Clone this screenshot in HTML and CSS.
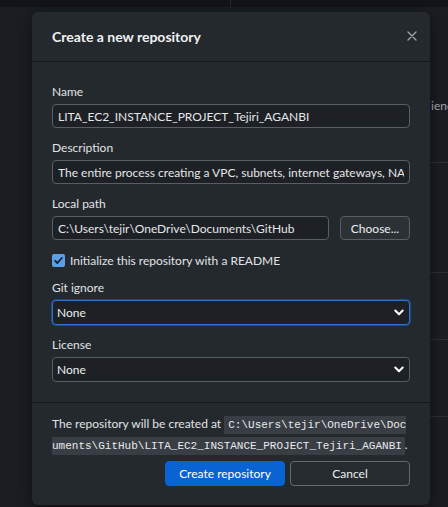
FILE: index.html
```html
<!DOCTYPE html>
<html lang="en">
<head>
<meta charset="utf-8">
<title>Create a new repository</title>
<link rel="stylesheet" href="styles.css">
</head>
<body>
<div class="app">
  <div class="toolbar"><div class="toolbar-left"></div><div class="toolbar-right"></div></div>
  <div class="main">
    <div class="sidebar"></div>
    <div class="pane">
      <div class="row row1"><span class="bg-text">ience</span></div>
      <div class="row row2"></div>
      <div class="row row3"></div>
      <div class="row row4"></div>
      <div class="row row5"></div>
    </div>
  </div>
</div>

<div class="dialog" role="dialog" aria-labelledby="dlg-title">
  <header class="dialog-header">
    <h1 id="dlg-title" class="dialog-title">Create a new repository</h1>
    <button class="close" aria-label="Close">
      <svg width="10" height="10" viewBox="0 0 10 10"><path d="M1 1 L9 9 M9 1 L1 9" stroke="currentColor" stroke-width="1.3" fill="none" stroke-linecap="round"/></svg>
    </button>
  </header>

  <div class="dialog-body">
    <label class="field">
      <span class="label">Name</span>
      <input class="text-input" type="text" value="LITA_EC2_INSTANCE_PROJECT_Tejiri_AGANBI">
    </label>
    <label class="field">
      <span class="label">Description</span>
      <input class="text-input" type="text" value="The entire process creating a VPC, subnets, internet gateways, NAT">
    </label>
    <div class="field">
      <span class="label">Local path</span>
      <div class="path-row">
        <input class="text-input path-input" type="text" value="C:\Users\tejir\OneDrive\Documents\GitHub">
        <button class="btn choose">Choose...</button>
      </div>
    </div>
    <label class="check-row">
      <span class="checkbox"><svg width="11" height="11" viewBox="0 0 11 11"><path d="M2.2 5.8 L4.4 8 L8.8 3" stroke="#1b1f24" stroke-width="1.8" fill="none" stroke-linecap="round" stroke-linejoin="round"/></svg></span>
      <span class="check-label">Initialize this repository with a README</span>
    </label>
    <label class="field">
      <span class="label">Git ignore</span>
      <span class="select-wrap focused">
        <select class="select"><option>None</option></select>
        <svg class="chev" width="10" height="7" viewBox="0 0 10 7"><path d="M1.3 1.5 L5 5.2 L8.7 1.5" stroke="#ffffff" stroke-width="2" fill="none" stroke-linecap="round" stroke-linejoin="round"/></svg>
      </span>
    </label>
    <label class="field">
      <span class="label">License</span>
      <span class="select-wrap">
        <select class="select"><option>None</option></select>
        <svg class="chev" width="10" height="7" viewBox="0 0 10 7"><path d="M1.3 1.5 L5 5.2 L8.7 1.5" stroke="#ffffff" stroke-width="2" fill="none" stroke-linecap="round" stroke-linejoin="round"/></svg>
      </span>
    </label>
  </div>

  <footer class="dialog-footer">
    <p class="path-note">The repository will be created at <code class="code">C:\Users\tejir\OneDrive\Documents\GitHub\LITA_EC2_INSTANCE_PROJECT_Tejiri_AGANBI</code>.</p>
    <div class="buttons">
      <button class="btn primary">Create repository</button>
      <button class="btn cancel">Cancel</button>
    </div>
  </footer>
</div>
</body>
</html>
```

FILE: styles.css
```css
* { box-sizing: border-box; }
html, body { margin: 0; padding: 0; }
body {
  width: 448px;
  height: 507px;
  overflow: hidden;
  background: #1a1d21;
  font-family: Lato, "Noto Sans", sans-serif;
  font-size: 12px;
  color: #dfe1e4;
  position: relative;
}

/* background app */
.app { height: 507px; display: flex; flex-direction: column; }
.toolbar { height: 7px; display: flex; background: #111418; flex: none; }
.toolbar-left { width: 231px; border-right: 1px solid #272b30; }
.toolbar-right { flex: 1; }
.main { flex: 1; display: flex; }
.sidebar { width: 230px; flex: none; }
.pane { flex: 1; display: flex; flex-direction: column; }
.row { border-bottom: 1px solid #2c3137; flex: none; }
.row1 { height: 156px; padding: 91px 0 0 201px; line-height: 16px; white-space: nowrap; }
.row2 { height: 110px; }
.row3 { height: 67px; }
.row4 { height: 77px; }
.row5 { flex: 1; border-bottom: none; }
.bg-text { color: #a7abb0; }

/* dialog */
.dialog {
  position: absolute;
  left: 32px;
  top: 12px;
  width: 398px;
  height: 493px;
  background: #24292e;
  border-radius: 6px;
  display: flex;
  flex-direction: column;
  box-shadow: 0 4px 16px rgba(0,0,0,0.45);
}
.dialog-header {
  height: 50px;
  flex: none;
  display: flex;
  align-items: center;
  justify-content: space-between;
  padding: 0 13px 1px 20px;
  border-bottom: 1px solid #15181b;
}
.dialog-title {
  margin: 0;
  font-size: 14px;
  font-weight: 700;
  color: #f0f1f2;
}
.close {
  width: 10px;
  height: 10px;
  padding: 0;
  border: 0;
  background: none;
  color: #a2a7ac;
  display: flex;
}

.dialog-body {
  flex: none;
  display: flex;
  flex-direction: column;
  gap: 12px;
  padding: 22px 20px 20px;
}
.field { display: flex; flex-direction: column; gap: 4px; }
.label { line-height: 16px; color: #e1e3e6; }
.text-input {
  height: 24px;
  width: 100%;
  border: 1px solid #585e65;
  border-radius: 4px;
  background: #1d2125;
  color: #e4e6e8;
  font: inherit;
  padding: 0 5px;
  outline: none;
}
.path-row { display: flex; gap: 11px; }
.path-input { flex: 1; width: auto; min-width: 0; }

.btn {
  font: inherit;
  color: #eceef0;
  border-radius: 4px;
  height: 24px;
  padding: 0;
  cursor: pointer;
}
.choose {
  width: 70px;
  flex: none;
  background: #2c3136;
  border: 1px solid #585e65;
}

.check-row { display: flex; align-items: center; gap: 5px; height: 16px; }
.checkbox {
  width: 13px;
  height: 13px;
  border-radius: 2px;
  background: #5b9fe8;
  display: flex;
  align-items: center;
  justify-content: center;
  flex: none;
}
.check-label { color: #e1e3e6; }

.select-wrap { position: relative; display: block; }
.select {
  -webkit-appearance: none;
  appearance: none;
  width: 100%;
  height: 25px;
  border: 1px solid #585e65;
  border-radius: 4px;
  background: #1d2125;
  color: #eceef0;
  font: inherit;
  padding: 0 4px;
  outline: none;
}
.focused .select {
  border-color: #2f72cf;
  box-shadow: 0 0 0 1px #1c4a86;
}
.chev { position: absolute; right: 6px; top: 9px; pointer-events: none; }

.dialog-footer {
  flex: 1;
  border-top: 1px solid #15181b;
  padding: 11px 20px 19px;
  display: flex;
  flex-direction: column;
}
.path-note {
  margin: 0;
  line-height: 19px;
  color: #e1e3e6;
}
.code {
  font-family: "Liberation Mono", "DejaVu Sans Mono", monospace;
  font-size: 11px;
  background: #393e45;
  color: #e8eaec;
  padding: 3px 3px 3px 4px;
  word-break: break-all;
}
.buttons {
  margin-top: auto;
  display: flex;
  justify-content: flex-end;
  gap: 5px;
}
.buttons .btn { width: 120px; height: 25px; }
.primary { background: #0a63d2; border: 1px solid #0a63d2; color: #ffffff; }
.cancel { background: #262b30; border: 1px solid #646a71; }
```
